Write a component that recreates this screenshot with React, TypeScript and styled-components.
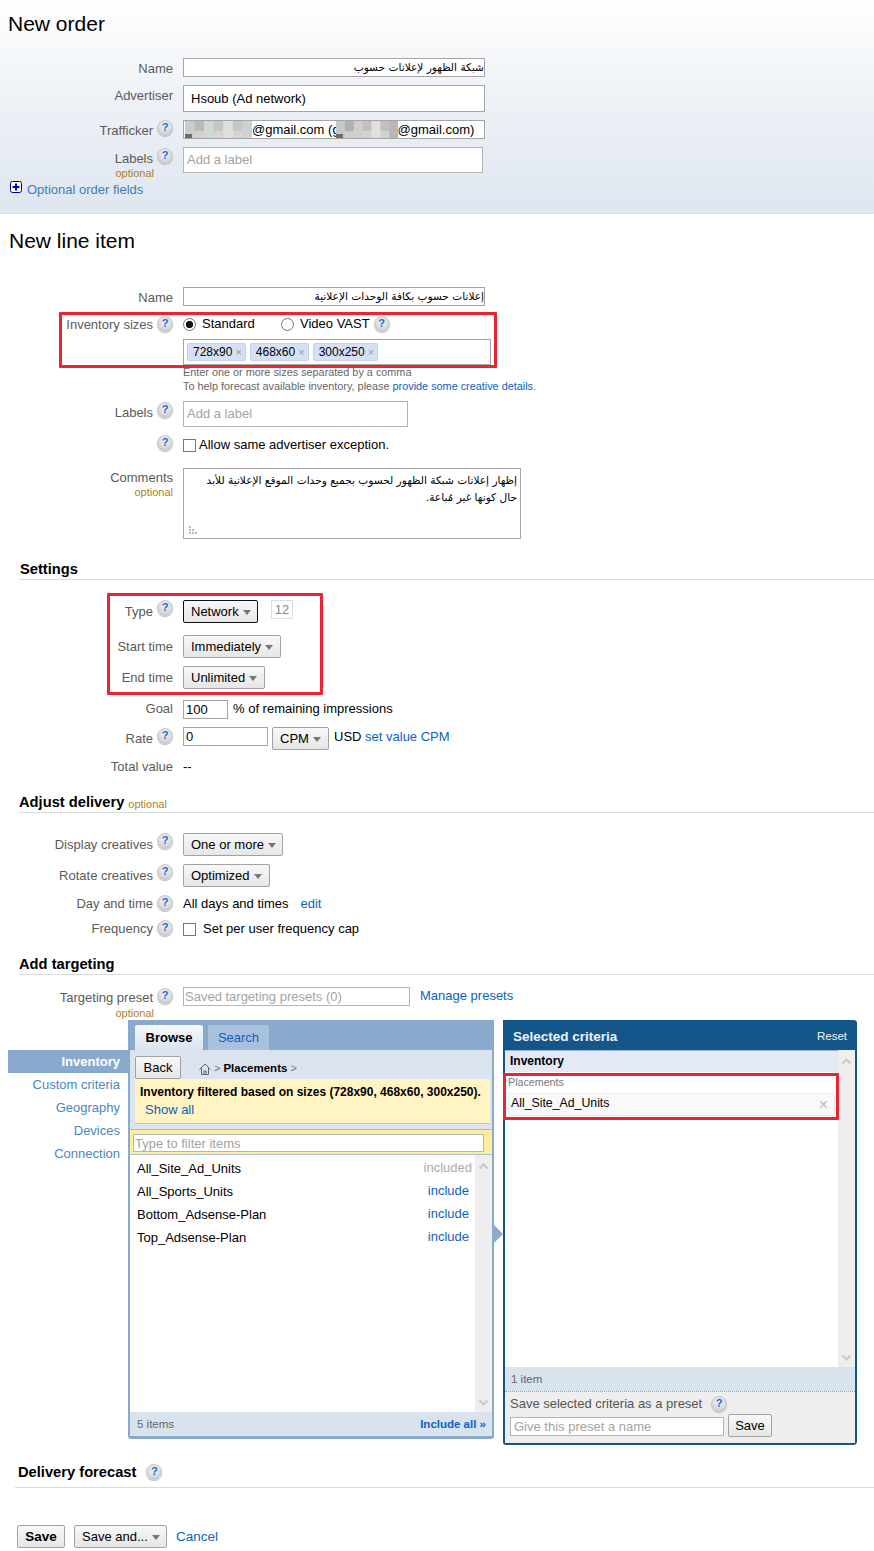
import React from "react";
import styled, { createGlobalStyle } from "styled-components";

const Global = createGlobalStyle`
  html, body { margin: 0; padding: 0; background: #fff; }
  body { font: 13px/16px "Liberation Sans", "DejaVu Sans", Arial, sans-serif; color: #000; }
  * { box-sizing: border-box; }
`;

const Page = styled.div`width: 874px; height: 1551px; overflow: hidden; position: relative;`;
const OrderPanel = styled.section`
  height: 214px; border-bottom: 1px solid #dcdfe4;
  background: linear-gradient(#ffffff 0%, #eef2f7 45%, #dfe6f0 100%);
`;
const PageTitle = styled.h1`
  margin: 0; font-size: 21px; font-weight: 400; line-height: 24px; padding: 12px 0 0 8px; height: 36px;
`;
const LineTitle = styled(PageTitle)`padding: 15px 0 0 9px; height: 39px;`;
const Row = styled.div<{ $mt?: number }>`
  display: flex; align-items: flex-start; margin-top: ${(p) => p.$mt ?? 8}px;
`;
const LabelCell = styled.div<{ $off?: number }>`
  width: 173px; flex: none; margin-right: 10px; padding-top: ${(p) => p.$off ?? 2}px;
  text-align: right; color: #5a5a5a; line-height: 16px;
`;
const LabelLine = styled.div`display: flex; justify-content: flex-end; align-items: flex-start; gap: 4px; height: 16px;`;
const HelpDot = styled.span`
  display: block; flex: none; width: 16px; height: 16px; border-radius: 50%;
  background: radial-gradient(circle at 50% 35%, #f6f6f6, #d8d8d8 60%, #b9b9b9);
  border: 1px solid #c8c8c8; box-shadow: 0 1px 1px #bbb;
  color: #0b6ed8; font: bold 11px/13px "Liberation Sans", sans-serif; text-align: center;
`;
const LabelHelpWrap = styled.div<{ $up?: number }>`display: flex; margin-top: -${(p) => p.$up ?? 0}px;`;
const Optional = styled.div<{ $pr?: number; $mt?: number }>`
  font-size: 11px; line-height: 12px; color: #a8832a; text-align: right;
  padding-right: ${(p) => p.$pr ?? 0}px; margin-top: ${(p) => p.$mt ?? 0}px;
`;
const Box = styled.div<{ $w: number; $h?: number; $pad?: number; $mt?: number; $rtl?: boolean; $muted?: boolean }>`
  width: ${(p) => p.$w}px; height: ${(p) => p.$h ?? 19}px; flex: none;
  border: 1px solid ${(p) => (p.$muted ? "#b5b5b5" : "#a5a5a5")}; background: #fff;
  padding: 0 ${(p) => p.$pad ?? 3}px; margin-top: ${(p) => p.$mt ?? 0}px;
  line-height: ${(p) => (p.$h ?? 19) - 2}px; white-space: nowrap; overflow: hidden;
  color: ${(p) => (p.$muted ? "#a3a3a3" : "#000")};
  direction: ${(p) => (p.$rtl ? "rtl" : "ltr")};
`;
const ArabicLine = styled.span`display: block; font: 10.6px/17px "DejaVu Sans", sans-serif;`;
const Pixelated = styled.svg`display: block; flex: none;`;
const EmailBox = styled(Box)`display: flex; padding: 0 0 0 1px; align-items: flex-start; line-height: 18px;`;
const OverG = styled.span`margin-right: -4px;`;
const Spacer = styled.span<{ $w: number }>`display: inline-block; width: ${(p) => p.$w}px; flex: none;`;
const OptionalFields = styled.div`
  display: flex; align-items: flex-start; gap: 5px; margin: 2px 0 0 10px; color: #3f80b5; font-size: 13px; line-height: 16px;
`;
const OptionalText = styled.span`padding-top: 1px;`;
const Group = styled.div<{ $mt?: number }>`position: relative; margin-top: ${(p) => p.$mt ?? 0}px;`;
const Highlight = styled.div<{ $t: number; $l: number; $w: number; $h: number }>`
  position: absolute; top: ${(p) => p.$t}px; left: ${(p) => p.$l}px; width: ${(p) => p.$w}px; height: ${(p) => p.$h}px;
  border: 3px solid #ee2233; border-radius: 1px; pointer-events: none; z-index: 2;
`;
const Field = styled.div`display: flex; flex-direction: column;`;
const RadioLine = styled.div`display: flex; align-items: center; height: 15px;`;
const Radio = styled.span<{ $on?: boolean }>`
  width: 13px; height: 13px; border-radius: 50%; border: 1px solid #777; flex: none; margin-top: 2px;
  background: ${(p) => (p.$on ? "radial-gradient(circle, #111 0 3.4px, #fff 3.9px)" : "#fff")};
`;
const RadioText = styled.span<{ $ml: number; $w?: number }>`
  margin-left: ${(p) => p.$ml}px; ${(p) => (p.$w ? `width:${p.$w}px;` : "")} font-size: 13px;
`;
const TagBox = styled.div`
  margin-top: 8px; width: 308px; height: 26px; border: 1px solid #a5a5a5; background: #fff;
  display: flex; gap: 4px; align-items: center; padding-left: 3px;
`;
const Tag = styled.span`
  height: 18px; display: inline-flex; align-items: center; gap: 3px; padding: 0 3px 0 5px;
  background: #d6e0f4; border: 1px solid #c3d1ef; border-radius: 2px; line-height: 16px; font-size: 12px;
`;
const TagX = styled.span`color: #999; font-size: 11px;`;
const Hint = styled.div`font-size: 10.85px; line-height: 14px; color: #666; white-space: nowrap;`;
const Link = styled.a`color: #0b62c4; text-decoration: none;`;
const CheckLine = styled.div<{ $gap: number; $mt: number }>`
  display: flex; gap: ${(p) => p.$gap}px; align-items: flex-start; line-height: 16px; margin-top: ${(p) => p.$mt}px;
`;
const Check = styled.span`width: 13px; height: 13px; border: 1px solid #777; background: #fff; flex: none; margin-top: 2px;`;
const CommentBox = styled(Box)`position: relative; white-space: normal; padding: 3px 3px 0 0; line-height: 17px;`;
const Grip = styled.svg`position: absolute; left: 5px; bottom: 3px;`;
const SectionHead = styled.div<{ $mt: number; $ml?: number; $pl?: number; $pb?: number; $gap?: number }>`
  margin: ${(p) => p.$mt}px 0 0 ${(p) => p.$ml ?? 19}px; padding: 0 0 ${(p) => p.$pb ?? 0}px ${(p) => p.$pl ?? 0}px;
  border-bottom: 1px solid #dcdcdc; display: flex; align-items: center; gap: ${(p) => p.$gap ?? 7}px;
  font: bold 14.7px/20px "Liberation Sans", sans-serif;
`;
const SectionNote = styled.span`font: 11px/12px "Liberation Sans", sans-serif; color: #a8832a; margin: 3px 0 0 -3px;`;
const Drop = styled.button<{ $w: number; $dark?: boolean; $bold?: boolean; $center?: boolean; $ml?: number }>`
  width: ${(p) => p.$w}px; height: 23px; flex: none; margin: 0 0 0 ${(p) => p.$ml ?? 0}px;
  font: ${(p) => (p.$bold ? "bold 13.5px" : "13px")}/16px "Liberation Sans", sans-serif; color: #000; padding: 0 0 0 7px;
  ${(p) => (p.$center ? "padding:0;justify-content:center;" : "")}
  display: flex; align-items: center; gap: 4px; white-space: nowrap;
  background: linear-gradient(#f8f8f8, #e6e6e6); border: 1px solid ${(p) => (p.$dark ? "#111" : "#a2a2a2")}; border-radius: 2px;
`;
const Caret = styled.span`width: 0; height: 0; border-style: solid; border-width: 5px 4.5px 0; border-color: #777 transparent transparent; margin-top: 1px;`;
const Count = styled.div`
  margin-left: 13px; width: 22px; height: 19px; border: 1px solid #ddd; color: #888; font-size: 13px; line-height: 17px; text-align: center;
`;
const InlineText = styled.span<{ $ml?: number; $mt?: number }>`
  margin-left: ${(p) => p.$ml ?? 0}px; margin-top: ${(p) => p.$mt ?? 0}px; white-space: nowrap;
`;
const Targeting = styled.div`display: flex; align-items: flex-start; margin-top: 1px; height: 426px;`;
const Nav = styled.nav`
  width: 120px; margin-left: 8px; padding-top: 30px; flex: none; text-align: right; color: #4a86c0; font-size: 13px;
`;
const NavItem = styled.div<{ $on?: boolean }>`
  height: 23px; line-height: 23px; padding-right: 8px;
  ${(p) => (p.$on ? "background:#8aaacd;color:#fff;font-weight:bold;" : "")}
`;
const Browser = styled.div`
  width: 366px; height: 419px; flex: none; border: solid #8aaacd; border-width: 0 2px 3px; border-radius: 0 0 3px 3px;
  display: flex; flex-direction: column; background: #fff; border-top-left-radius: 3px;
`;
const TabBar = styled.div`
  height: 30px; background: #8aaacd; display: flex; gap: 5px; padding: 5px 0 0 7px; flex: none; margin: 0 -2px;
`;
const TabBtn = styled.div<{ $on?: boolean; $w: number }>`
  width: ${(p) => p.$w}px; height: ${(p) => (p.$on ? 26 : 25)}px; border-radius: 2px 2px 0 0; text-align: center; line-height: 25px; font-size: 13px;
  ${(p) => (p.$on ? "background:linear-gradient(#f6f8fb,#dae3ee);font-weight:bold;color:#000;position:relative;" : "background:#a9c1dc;color:#0b62c4;")}
`;
const Toolbar = styled.div`height: 79px; background: #dae3ee; padding: 6px 2px 0 5px; flex: none;`;
const Crumbs = styled.div`display: flex; align-items: center; height: 23px;`;
const CrumbHome = styled.svg`margin: 2px 3px 0 18px; flex: none;`;
const CrumbSep = styled.span`color: #777; font-size: 11px;`;
const CrumbName = styled.span`font: bold 11.5px/16px "Liberation Sans", sans-serif; margin: 0 3px;`;
const Notice = styled.div`
  height: 45px; background: #fff4c2; border-bottom: 1px solid #b5c6d8; padding: 5px 0 0 5px;
  font: bold 12px/16px "Liberation Sans", sans-serif;
`;
const NoticeLink = styled(Link)`display: block; font: 13px/16px "Liberation Sans", sans-serif; margin: 2px 0 0 5px;`;
const FilterBar = styled.div`
  height: 26px; flex: none; background: #ffec9e; border: solid #a9bfd6; border-width: 1px 0; padding: 4px 0 0 3px;
`;
const FilterBox = styled(Box)`font-size: 13px; line-height: 16px; padding: 1px 1px 0;`;
const ListArea = styled.div`flex: 1; display: flex; min-height: 0;`;
const Items = styled.div`flex: 1; padding-top: 2px;`;
const ItemRow = styled.div`
  height: 23px; display: flex; align-items: center; justify-content: space-between; padding: 0 6px 0 7px; font-size: 13px;
`;
const ItemAct = styled(Link)<{ $off?: boolean }>`
  margin-top: -2px; ${(p) => (p.$off ? "color:#aaa;margin-right:-3px;" : "")}
`;
const ScrollTrack = styled.div`
  width: 17px; flex: none; background: #eee; display: flex; flex-direction: column; justify-content: space-between; align-items: center; padding: 8px 0 6px;
`;
const Footer = styled.div`
  height: 24px; flex: none; background: #d9e3ed; display: flex; justify-content: space-between; align-items: center; padding: 0 6px 0 7px;
  font-size: 11.5px; color: #666;
`;
const SelFooter = styled(Footer)`padding-left: 6px;`;
const BoldLink = styled(Link)`font-weight: bold;`;
const Joint = styled.svg`flex: none; margin: 203px 0 0 -2px; position: relative;`;
const Selected = styled.div`
  width: 354px; height: 425px; flex: none; background: #fff; border: solid #14568a; border-width: 0 2px 2px;
  border-radius: 0 4px 4px 3px; display: flex; flex-direction: column; position: relative;
`;
const SelectedHead = styled.div`
  height: 30px; flex: none; margin: 0 -2px; padding: 3px 10px 0; background: #14568a; color: #eef3f8; border-radius: 0 4px 0 0;
  display: flex; justify-content: space-between; align-items: center; font: bold 13.5px/20px "Liberation Sans", sans-serif;
`;
const ResetText = styled.span`font: 11.5px/16px "Liberation Sans", sans-serif; margin-top: -1px;`;
const SelectedBody = styled.div`flex: 1; display: flex; min-height: 0; position: relative;`;
const SelectedList = styled.div`flex: 1;`;
const GroupHead = styled.div`
  height: 22px; background: #e3e9f6; border-top: 1px solid #9cb5cf; font: bold 12px/21px "Liberation Sans", sans-serif; padding-left: 5px;
`;
const SubLabel = styled.div`font-size: 10.7px; line-height: 12px; color: #777; padding: 4px 0 0 3px;`;
const SelItem = styled.div`
  margin: 5px 0 0 3px; width: 327px; height: 23px; background: #f9f9f9; border: 1px solid #ececec;
  display: flex; justify-content: space-between; padding: 1px 6px 0 2px; line-height: 16px; font-size: 12.3px;
`;
const SelX = styled.span`color: #bbb; font-size: 16px; line-height: 20px;`;
const SaveArea = styled.div`
  height: 52px; flex: none; background: #eee; border-top: 1px dotted #9aa; padding: 4px 0 0 5px; color: #555; font-size: 13px;
`;
const SaveTitle = styled.div`display: flex; align-items: center; gap: 9px; height: 16px;`;
const SaveRow = styled.div`display: flex; gap: 4px; margin-top: 2px; align-items: flex-start;`;
const Actions = styled.div`display: flex; align-items: center; gap: 9px; margin: 37px 0 0 17px; height: 23px;`;
const CancelLink = styled(Link)`font-size: 13.5px;`;

const Help = () => <HelpDot>?</HelpDot>;

const Label = ({ text, help, off, helpUp, optional, optMt }: { text: string; help?: boolean; off?: number; helpUp?: number; optional?: boolean; optMt?: number }) => (
  <LabelCell $off={off}>
    <LabelLine>
      {text}
      {help && <LabelHelpWrap $up={helpUp}><Help /></LabelHelpWrap>}
    </LabelLine>
    {optional && <Optional $pr={help ? 19 : 0} $mt={optMt}>optional</Optional>}
  </LabelCell>
);

const Blur = ({ w, cols, dark }: { w: number; cols: string[]; dark?: boolean }) => {
  const cw = w / cols.length;
  return (
    <Pixelated width={w} height={17} viewBox={`0 0 ${w} 17`}>
      {cols.map((c, i) => <rect key={i} x={i * cw} y={0} width={cw + 0.5} height={17} fill={c} />)}
      {cols.map((c, i) => <rect key={"b" + i} x={i * cw} y={10} width={cw + 0.5} height={7} fill={i % 2 ? "#d8d8d6" : c} opacity={0.75} />)}
      {dark && <rect x={0} y={13} width={7} height={4} fill="#555" opacity={0.8} />}
    </Pixelated>
  );
};

const Chevron = ({ up }: { up?: boolean }) => (
  <svg width="11" height="7" viewBox="0 0 11 7">
    <path d={up ? "M1.5 5.5 L5.5 1.5 L9.5 5.5" : "M1.5 1.5 L5.5 5.5 L9.5 1.5"} fill="none" stroke="#c8c8c8" strokeWidth="2" />
  </svg>
);

export default function App() {
  return (
    <Page>
      <Global />
      <OrderPanel>
        <PageTitle>New order</PageTitle>
        <Row $mt={22}>
          <Label text="Name" off={3} />
          <Box $w={302} $rtl $pad={0}><ArabicLine>شبكة الظهور لإعلانات حسوب</ArabicLine></Box>
        </Row>
        <Row>
          <Label text="Advertiser" off={3} />
          <Box $w={302} $h={27} $pad={7}>Hsoub (Ad network)</Box>
        </Row>
        <Row>
          <Label text="Trafficker" help off={3} helpUp={3} />
          <EmailBox $w={302}>
            <Blur w={67} dark cols={["#cbcccc", "#bdb9b8", "#cfd7d8", "#c8c5c1", "#dcdfe0", "#c9c6c2", "#cdd2d3"]} />
            @gmail.com (<OverG>g</OverG>
            <Blur w={62} dark cols={["#c8c8c8", "#aeb0b5", "#cfcdc9", "#bfc0c0", "#e2e0d9", "#bfc0c6", "#b9b6b3"]} />
            @gmail.com)
          </EmailBox>
        </Row>
        <Row>
          <Label text="Labels" help off={4} helpUp={3} optional />
          <Box $w={300} $h={26} $muted>Add a label</Box>
        </Row>
        <OptionalFields>
          <svg width="12" height="12" viewBox="0 0 12 12">
            <rect x=".5" y=".5" width="11" height="11" rx="2" fill="#fff" stroke="#000080" />
            <path d="M2.5 6h7M6 2.5v7" stroke="#0000d0" strokeWidth="2" />
          </svg>
          <OptionalText>Optional order fields</OptionalText>
        </OptionalFields>
      </OrderPanel>

      <LineTitle>New line item</LineTitle>
      <Row $mt={34}>
        <Label text="Name" off={3} />
        <Box $w={302} $rtl $pad={0}><ArabicLine>إعلانات حسوب بكافة الوحدات الإعلانية</ArabicLine></Box>
      </Row>
      <Group $mt={10}>
        <Highlight $t={-4} $l={59} $w={438} $h={56} />
        <Row $mt={0}>
          <Label text="Inventory sizes" help off={1} helpUp={1} />
          <Field>
            <RadioLine>
              <Radio $on />
              <RadioText $ml={6} $w={79}>Standard</RadioText>
              <Radio />
              <RadioText $ml={6}>Video VAST</RadioText>
              <Spacer $w={4} />
              <Help />
            </RadioLine>
            <TagBox>
              <Tag>728x90 <TagX>×</TagX></Tag>
              <Tag>468x60 <TagX>×</TagX></Tag>
              <Tag>300x250 <TagX>×</TagX></Tag>
            </TagBox>
            <Hint>Enter one or more sizes separated by a comma</Hint>
            <Hint>To help forecast available inventory, please <Link>provide some creative details</Link>.</Hint>
          </Field>
        </Row>
      </Group>
      <Row>
        <Label text="Labels" help off={4} helpUp={3} />
        <Box $w={225} $h={26} $muted>Add a label</Box>
      </Row>
      <Row>
        <Label text="" help off={0} />
        <CheckLine $gap={3} $mt={2}><Check />Allow same advertiser exception.</CheckLine>
      </Row>
      <Row $mt={15}>
        <Label text="Comments" optional />
        <CommentBox $w={338} $h={71} $rtl>
          <ArabicLine>إظهار إعلانات شبكة الظهور لحسوب بجميع وحدات الموقع الإعلانية للأبد<br />حال كونها غير مُباعة.</ArabicLine>
          <Grip width="9" height="9" viewBox="0 0 9 9">
            <path d="M0 0h2v2H0zM0 3h2v2H0zM3 3h2v2H3zM0 6h2v2H0zM3 6h2v2H3zM6 6h2v2H6z" fill="#bbb" />
          </Grip>
        </CommentBox>
      </Row>

      <SectionHead $mt={20} $pl={1}>Settings</SectionHead>
      <Group $mt={20}>
        <Highlight $t={-7} $l={107} $w={216} $h={102} />
        <Row $mt={0}>
          <Label text="Type" help off={4} helpUp={4} />
          <Drop $w={75} $dark>Network <Caret /></Drop>
          <Count>12</Count>
        </Row>
        <Row $mt={12}>
          <Label text="Start time" off={4} />
          <Drop $w={98}>Immediately <Caret /></Drop>
        </Row>
        <Row>
          <Label text="End time" off={4} />
          <Drop $w={82}>Unlimited <Caret /></Drop>
        </Row>
      </Group>
      <Row $mt={11}>
        <Label text="Goal" off={1} />
        <Box $w={45} $pad={2}>100</Box>
        <InlineText $ml={5} $mt={1}>% of remaining impressions</InlineText>
      </Row>
      <Row>
        <Label text="Rate" help off={4} helpUp={3} />
        <Box $w={85} $pad={2}>0</Box>
        <Drop $w={57} $ml={4}>CPM <Caret /></Drop>
        <InlineText $ml={5} $mt={2}>USD <Link>set value CPM</Link></InlineText>
      </Row>
      <Row>
        <Label text="Total value" off={1} />
        <InlineText $mt={1}>--</InlineText>
      </Row>

      <SectionHead $mt={17}>Adjust delivery <SectionNote>optional</SectionNote></SectionHead>
      <Row $mt={20}>
        <Label text="Display creatives" help off={4} helpUp={4} />
        <Drop $w={100}>One or more <Caret /></Drop>
      </Row>
      <Row>
        <Label text="Rotate creatives" help off={4} helpUp={4} />
        <Drop $w={87}>Optimized <Caret /></Drop>
      </Row>
      <Row>
        <Label text="Day and time" help off={1} helpUp={1} />
        <InlineText $mt={1}>All days and times</InlineText>
        <InlineText $ml={12} $mt={1}><Link>edit</Link></InlineText>
      </Row>
      <Row>
        <Label text="Frequency" help off={1} helpUp={1} />
        <CheckLine $gap={7} $mt={1}><Check />Set per user frequency cap</CheckLine>
      </Row>

      <SectionHead $mt={17}>Add targeting</SectionHead>
      <Row $mt={12}>
        <Label text="Targeting preset" help off={3} helpUp={2} optional optMt={1} />
        <Box $w={227} $muted $pad={1}>Saved targeting presets (0)</Box>
        <InlineText $ml={10} $mt={1}><Link>Manage presets</Link></InlineText>
      </Row>

      <Targeting>
        <Nav>
          <NavItem $on>Inventory</NavItem>
          <NavItem>Custom criteria</NavItem>
          <NavItem>Geography</NavItem>
          <NavItem>Devices</NavItem>
          <NavItem>Connection</NavItem>
        </Nav>
        <Browser>
          <TabBar>
            <TabBtn $on $w={68}>Browse</TabBtn>
            <TabBtn $w={61}>Search</TabBtn>
          </TabBar>
          <Toolbar>
            <Crumbs>
              <Drop $w={46} $center>Back</Drop>
              <CrumbHome width="12" height="12" viewBox="0 0 12 12">
                <path d="M.5 6.5 6 1l5.5 5.5M2.5 5v6.5h7V5M5 11.5V8h2v3.5" fill="none" stroke="#666" />
              </CrumbHome>
              <CrumbSep>&gt;</CrumbSep>
              <CrumbName>Placements</CrumbName>
              <CrumbSep>&gt;</CrumbSep>
            </Crumbs>
            <Notice>
              Inventory filtered based on sizes (728x90, 468x60, 300x250).
              <NoticeLink>Show all</NoticeLink>
            </Notice>
          </Toolbar>
          <FilterBar><FilterBox $w={351} $h={18} $muted>Type to filter items</FilterBox></FilterBar>
          <ListArea>
            <Items>
              <ItemRow>All_Site_Ad_Units <ItemAct $off>included</ItemAct></ItemRow>
              <ItemRow>All_Sports_Units <ItemAct>include</ItemAct></ItemRow>
              <ItemRow>Bottom_Adsense-Plan <ItemAct>include</ItemAct></ItemRow>
              <ItemRow>Top_Adsense-Plan <ItemAct>include</ItemAct></ItemRow>
            </Items>
            <ScrollTrack><Chevron up /><Chevron /></ScrollTrack>
          </ListArea>
          <Footer>5 items <BoldLink>Include all »</BoldLink></Footer>
        </Browser>
        <Joint width="11" height="22" viewBox="0 0 11 22"><path d="M0 0 11 11 0 22z" fill="#8aaacd" /></Joint>
        <Selected>
          <SelectedHead>Selected criteria <ResetText>Reset</ResetText></SelectedHead>
          <SelectedBody>
            <Highlight $t={23} $l={-2} $w={336} $h={47} />
            <SelectedList>
              <GroupHead>Inventory</GroupHead>
              <SubLabel>Placements</SubLabel>
              <SelItem>All_Site_Ad_Units <SelX>×</SelX></SelItem>
            </SelectedList>
            <ScrollTrack><Chevron up /><Chevron /></ScrollTrack>
          </SelectedBody>
          <SelFooter>1 item</SelFooter>
          <SaveArea>
            <SaveTitle>Save selected criteria as a preset <Help /></SaveTitle>
            <SaveRow>
              <Box $w={214} $mt={3} $muted>Give this preset a name</Box>
              <Drop $w={44} $center>Save</Drop>
            </SaveRow>
          </SaveArea>
        </Selected>
      </Targeting>

      <SectionHead $mt={16} $ml={15} $pl={3} $pb={5} $gap={10}>Delivery forecast <Help /></SectionHead>
      <Actions>
        <Drop $w={48} $bold $center>Save</Drop>
        <Drop $w={93}>Save and... <Caret /></Drop>
        <CancelLink>Cancel</CancelLink>
      </Actions>
    </Page>
  );
}
